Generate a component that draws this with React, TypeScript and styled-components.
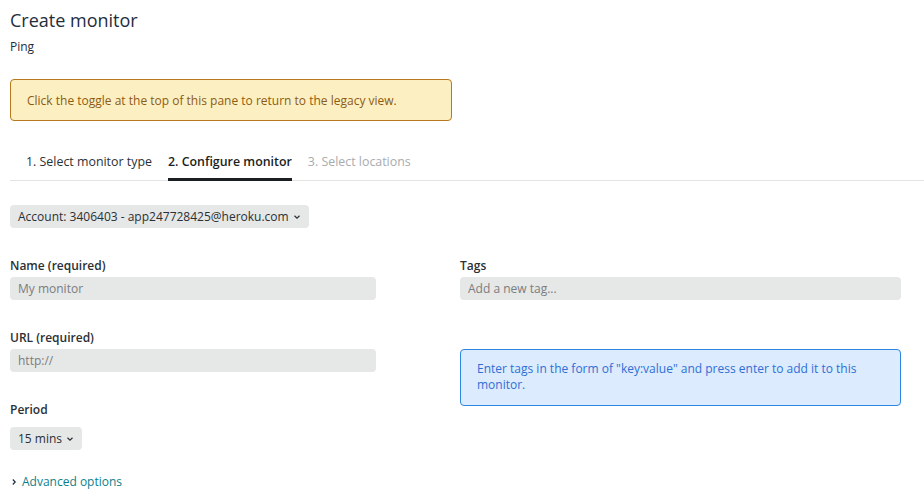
import styled, { createGlobalStyle } from "styled-components";

const GlobalStyle = createGlobalStyle`
  html, body {
    margin: 0;
    padding: 0;
    background: #ffffff;
  }

  body {
    font-family: "Open Sans", "Noto Sans", sans-serif;
    font-size: 12px;
    color: #1f2d3d;
  }
`;

const Chevron = ({ dir = "down" }: { dir?: "down" | "right" }) => (
  <svg
    width="8"
    height="8"
    viewBox="0 0 8 8"
    style={{ transform: dir === "right" ? "rotate(-90deg)" : undefined }}
  >
    <path
      d="M1.5 2.8 L4 5.2 L6.5 2.8"
      fill="none"
      stroke="currentColor"
      strokeWidth="1.2"
    />
  </svg>
);

const tabs = [
  { label: "1. Select monitor type", state: "done" },
  { label: "2. Configure monitor", state: "active" },
  { label: "3. Select locations", state: "todo" },
] as const;

export default function App() {
  return (
    <>
      <GlobalStyle />
      <Page>
        <Title>Create monitor</Title>
        <Subtitle>Ping</Subtitle>

        <Warning>
          Click the toggle at the top of this pane to return to the legacy view.
        </Warning>

        <Tabs>
          {tabs.map((tab) => (
            <Tab key={tab.label} $state={tab.state}>
              {tab.label}
            </Tab>
          ))}
        </Tabs>

        <Select>
          Account: 3406403 - app247728425@heroku.com <Chevron />
        </Select>

        <Form>
          <Column>
            <Field>
              <Label>Name (required)</Label>
              <Input placeholder="My monitor" />
            </Field>
            <Field>
              <Label>URL (required)</Label>
              <Input placeholder="http://" />
            </Field>
            <Field>
              <Label>Period</Label>
              <Select>
                15 mins <Chevron />
              </Select>
            </Field>
          </Column>

          <Column>
            <Field>
              <Label>Tags</Label>
              <Input placeholder="Add a new tag..." />
            </Field>
            <Info>
              Enter tags in the form of "key:value" and press enter to add it to
              this monitor.
            </Info>
          </Column>
        </Form>

        <Advanced>
          <Chevron dir="right" />
          Advanced options
        </Advanced>
      </Page>
    </>
  );
}

const Page = styled.div`
  padding: 7px 0 0 10px;
`;

const Title = styled.h1`
  margin: 0;
  font-size: 18px;
  font-weight: 400;
  line-height: 26px;
  color: #1f2d3d;
`;

const Subtitle = styled.div`
  margin-top: 5px;
  line-height: 18px;
  color: #1f2d3d;
`;

const Warning = styled.div`
  box-sizing: border-box;
  width: 442px;
  height: 42px;
  margin-top: 23px;
  padding: 0 16px;
  display: flex;
  align-items: center;

  border: 1px solid #b8791c;
  border-radius: 4px;
  background-color: #fcf0c2;
  color: #8d5b12;
  font-size: 12px;
`;

const Tabs = styled.div`
  display: flex;
  gap: 16px;
  margin-top: 24px;
  padding-left: 16px;
  border-bottom: 1px solid #e2e3e3;
`;

const Tab = styled.div<{ $state: "done" | "active" | "todo" }>`
  padding: 8px 0 7px;
  line-height: 18px;
  margin-bottom: -1px;
  font-size: 12.4px;
  font-weight: ${({ $state }) => ($state === "active" ? 600 : 400)};
  color: ${({ $state }) =>
    $state === "todo" ? "#a8abae" : $state === "active" ? "#1b1f22" : "#2b3035"};
  border-bottom: 3px solid
    ${({ $state }) => ($state === "active" ? "#1b1f22" : "transparent")};
`;

const Select = styled.div`
  display: inline-flex;
  align-items: center;
  gap: 4px;
  height: 23px;
  margin-top: 24px;
  padding: 0 8px;

  border-radius: 4px;
  background-color: #e6e7e7;
  color: #2b3035;
  font-size: 12px;
`;

const Form = styled.div`
  display: grid;
  grid-template-columns: 366px 441px;
  column-gap: 84px;
  margin-top: 29px;
`;

const Column = styled.div`
  display: flex;
  flex-direction: column;
  gap: 29px;
  align-items: flex-start;

  ${Select} {
    margin-top: 6px;
  }
`;

const Field = styled.div`
  display: flex;
  flex-direction: column;
  align-items: flex-start;
  align-self: stretch;
  gap: 2px;
`;

const Label = styled.label`
  line-height: 18px;
  font-weight: 600;
  color: #2b3035;
`;

const Input = styled.input`
  box-sizing: border-box;
  width: 100%;
  height: 23px;
  padding: 0 8px;
  border: none;
  border-radius: 4px;
  background-color: #e6e7e7;
  font-family: inherit;
  font-size: 12px;
  color: #2b3035;
  outline: none;

  &::placeholder {
    color: #7a7d80;
  }
`;

const Info = styled.div`
  box-sizing: border-box;
  align-self: stretch;
  margin-top: 20px;
  padding: 11px 16px 12px;
  line-height: 16px;

  border: 1px solid #2d86e0;
  border-radius: 4px;
  background-color: #dcebfd;
  color: #2f6fd6;
`;

const Advanced = styled.div`
  display: flex;
  align-items: center;
  gap: 4px;
  margin-top: 23px;
  color: #0d7f8c;
  line-height: 18px;

  svg {
    color: #1f2d3d;
  }
`;
